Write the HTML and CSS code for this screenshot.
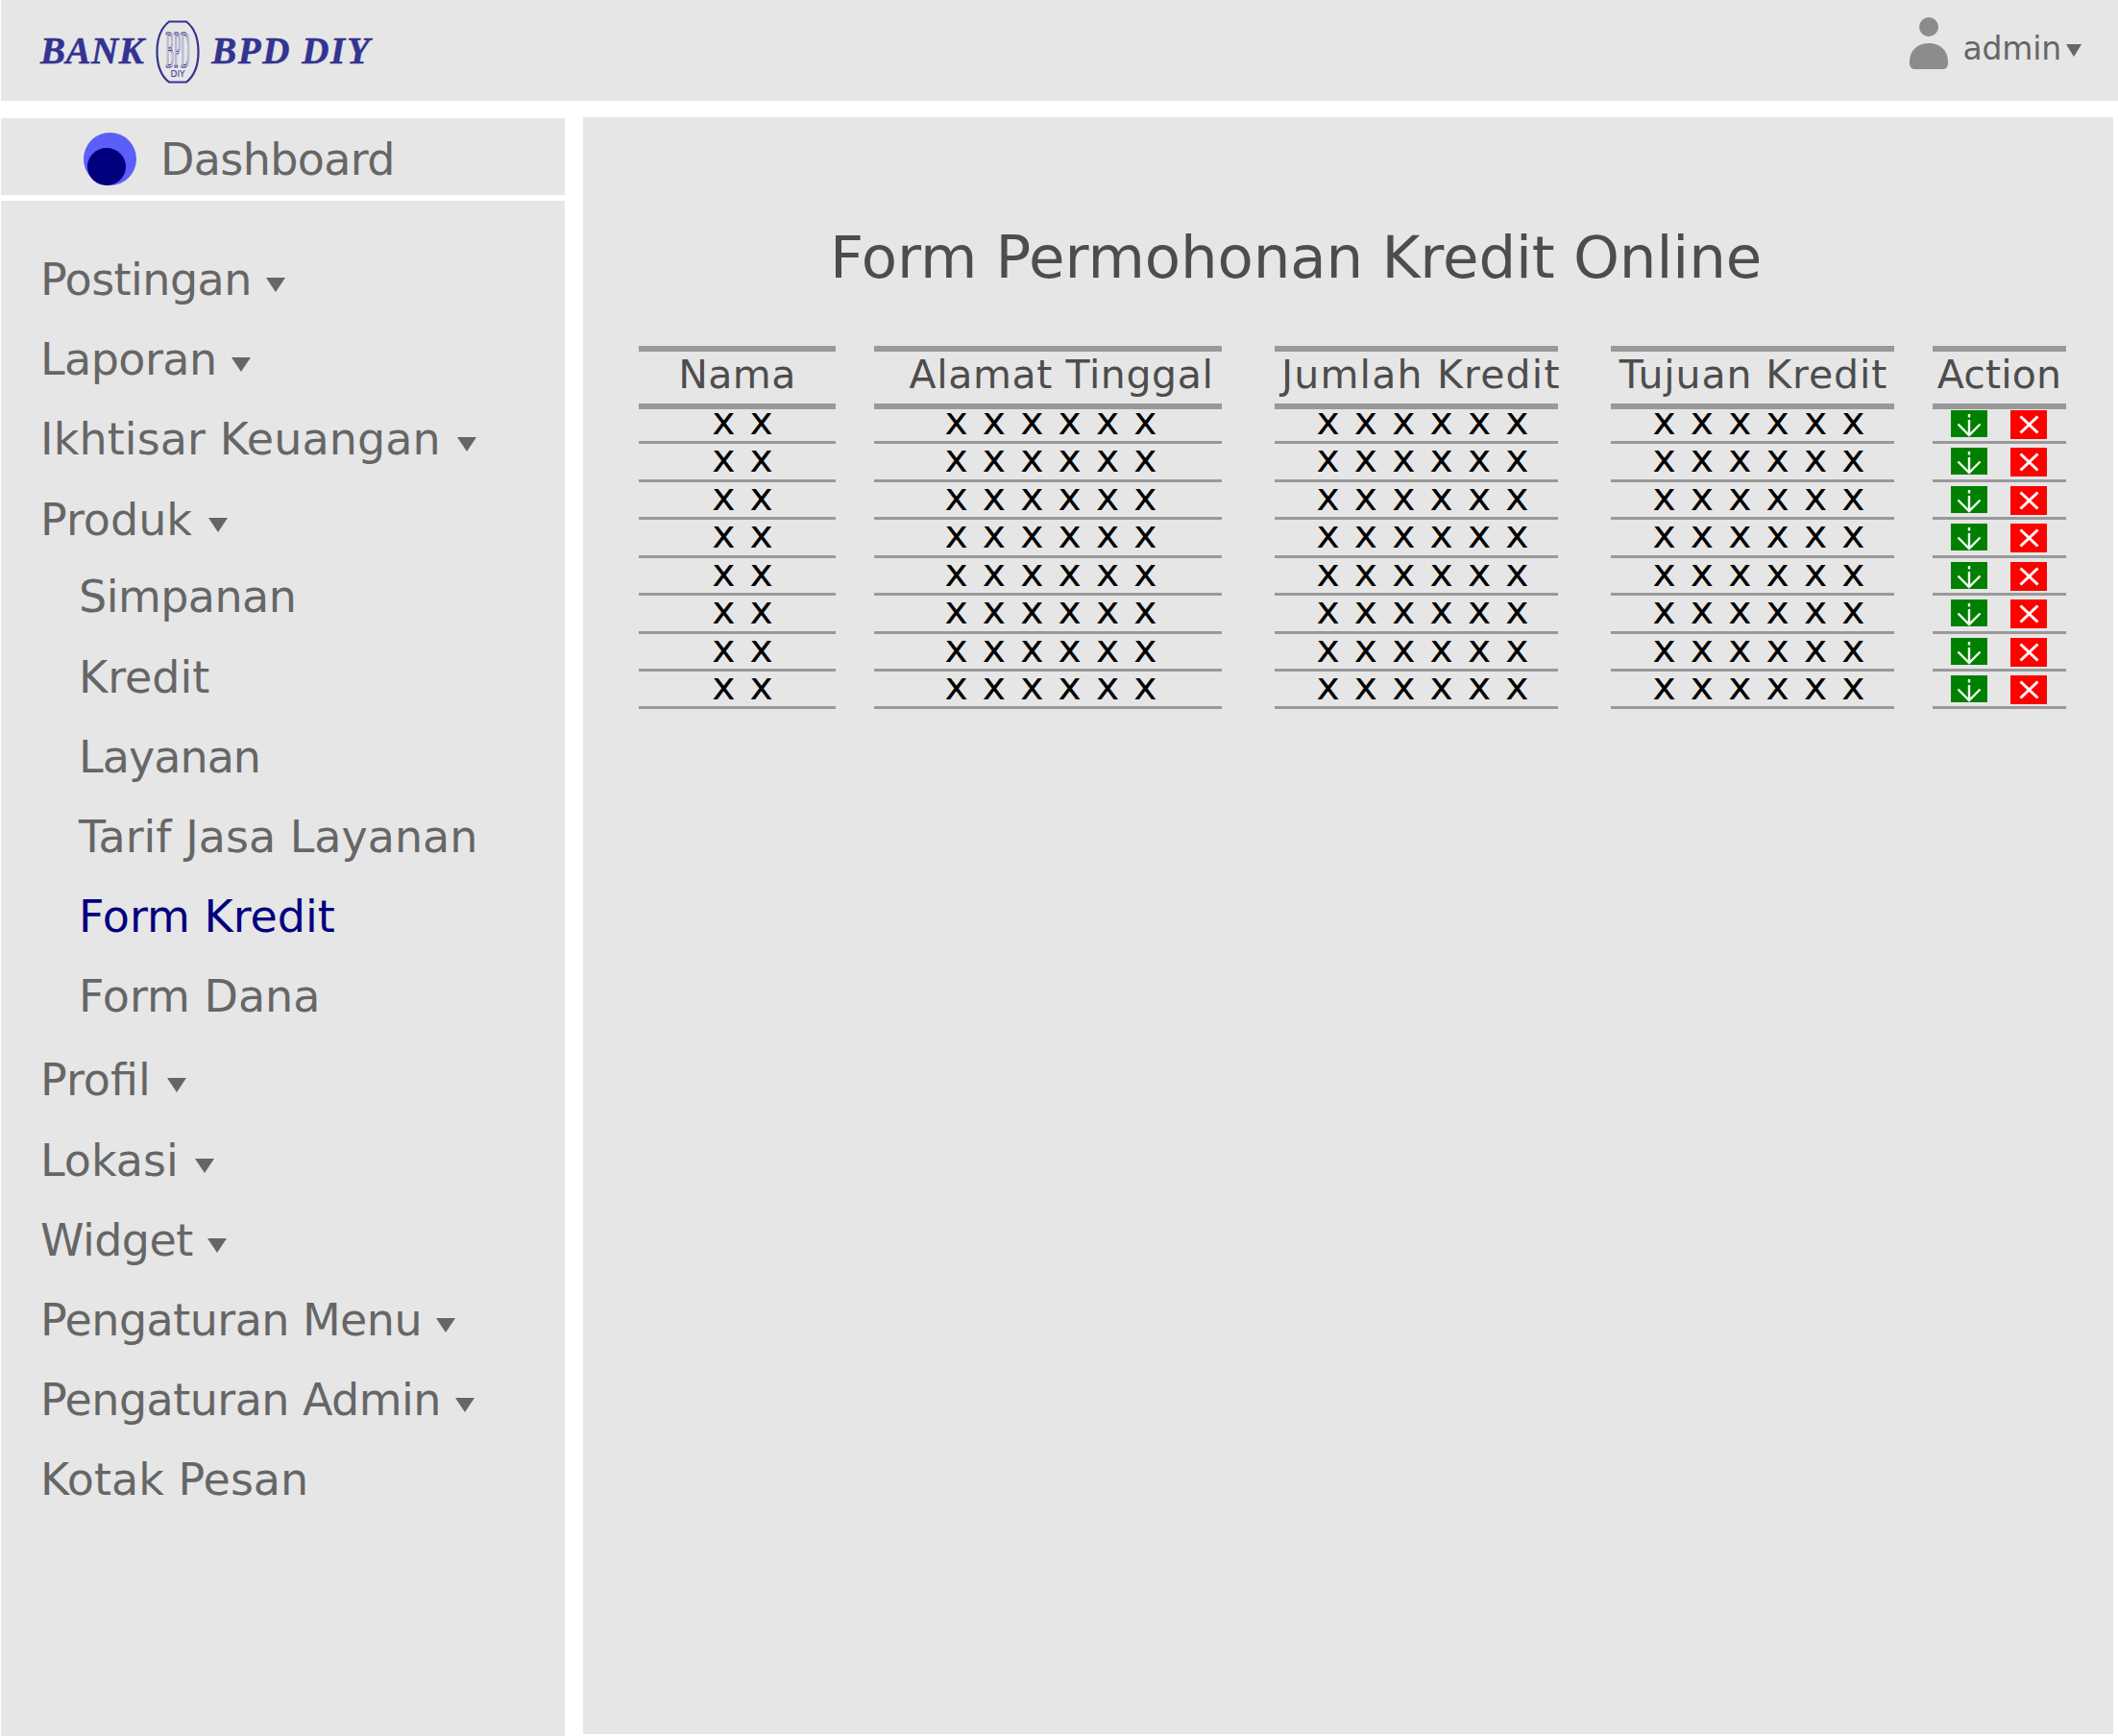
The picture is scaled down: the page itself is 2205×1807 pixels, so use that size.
FILE: index.html
```html
<!DOCTYPE html>
<html lang="id">
<head>
<meta charset="utf-8">
<title>Form Permohonan Kredit Online</title>
<link rel="stylesheet" href="styles.css">
</head>
<body>
<svg class="defs" width="0" height="0">
  <symbol id="i-ok" viewBox="0 0 38 28"><path d="M19 4v3.500M19 10v15.500M7.500 14.500L19 26 30.500 14.500" fill="none" stroke="#f2f8f2" stroke-width="2.400"/></symbol>
  <symbol id="i-del" viewBox="0 0 38 30"><path d="M10.500 6.500l18 17M28.500 6.500l-18 17" fill="none" stroke="#fff" stroke-width="3"/></symbol>
</svg>
<div class="page">
  <header class="topbar">
    <div class="logo">
      <span>BANK</span>
      <svg class="emblem" width="46" height="66" viewBox="0 0 46 66">
        <path d="M14 1.500H32C39 7 44.500 18 44.500 33S39 59 32 64.500H14C7 59 1.500 48 1.500 33S7 7 14 1.500Z" fill="none" stroke="#333391" stroke-width="2.200"/>
        <text class="emblem-mono" x="23" y="49" textLength="25" lengthAdjust="spacingAndGlyphs" text-anchor="middle">BPD</text>
        <text class="emblem-sub" x="23" y="59" textLength="15" lengthAdjust="spacingAndGlyphs" text-anchor="middle">DIY</text>
      </svg>
      <span class="logo-name">BPD DIY</span>
    </div>
    <div class="user">
      <svg class="user-icon" width="40" height="54" viewBox="0 0 40 54">
        <circle cx="20" cy="10" r="10" fill="#8c8c8c"/>
        <path d="M0 46C0 34 9 27 20 27S40 34 40 46V48C40 51 38 54 35 54H5C2 54 0 51 0 48Z" fill="#8c8c8c"/>
      </svg>
      <span class="user-name">admin</span>
      <i class="caret caret-small"></i>
    </div>
  </header>
  <div class="body-row">
    <aside class="sidebar">
      <div class="dash">
        <span class="dash-icon"><span class="dash-icon-inner"></span></span>
        <span class="dash-label">Dashboard</span>
      </div>
      <nav class="menu">
        <ul class="menu-list">
          <li class="menu-item tight">Postingan<i class="caret"></i></li>
          <li class="menu-item tight">Laporan<i class="caret"></i></li>
          <li class="menu-item loose">Ikhtisar Keuangan<i class="caret"></i></li>
          <li class="menu-item">Produk<i class="caret"></i></li>
          <li>
            <ul class="sub-list">
              <li class="menu-item tight">Simpanan</li>
              <li class="menu-item">Kredit</li>
              <li class="menu-item tighter">Layanan</li>
              <li class="menu-item">Tarif Jasa Layanan</li>
              <li class="menu-item active">Form Kredit</li>
              <li class="menu-item">Form Dana</li>
            </ul>
          </li>
          <li class="menu-item">Profil<i class="caret"></i></li>
          <li class="menu-item">Lokasi<i class="caret"></i></li>
          <li class="menu-item tight">Widget<i class="caret"></i></li>
          <li class="menu-item tight">Pengaturan Menu<i class="caret"></i></li>
          <li class="menu-item tight">Pengaturan Admin<i class="caret"></i></li>
          <li class="menu-item">Kotak Pesan</li>
        </ul>
      </nav>
    </aside>
    <main class="content">
      <h1 class="title">Form Permohonan Kredit Online</h1>
      <div class="table">
        <div class="col col-nama"><div class="head">Nama</div><div class="cell">x x</div><div class="cell">x x</div><div class="cell">x x</div><div class="cell">x x</div><div class="cell">x x</div><div class="cell">x x</div><div class="cell">x x</div><div class="cell">x x</div></div>
        <div class="col col-alamat"><div class="head">Alamat Tinggal</div><div class="cell">x x x x x x</div><div class="cell">x x x x x x</div><div class="cell">x x x x x x</div><div class="cell">x x x x x x</div><div class="cell">x x x x x x</div><div class="cell">x x x x x x</div><div class="cell">x x x x x x</div><div class="cell">x x x x x x</div></div>
        <div class="col col-jumlah"><div class="head">Jumlah Kredit</div><div class="cell">x x x x x x</div><div class="cell">x x x x x x</div><div class="cell">x x x x x x</div><div class="cell">x x x x x x</div><div class="cell">x x x x x x</div><div class="cell">x x x x x x</div><div class="cell">x x x x x x</div><div class="cell">x x x x x x</div></div>
        <div class="col col-tujuan"><div class="head">Tujuan Kredit</div><div class="cell">x x x x x x</div><div class="cell">x x x x x x</div><div class="cell">x x x x x x</div><div class="cell">x x x x x x</div><div class="cell">x x x x x x</div><div class="cell">x x x x x x</div><div class="cell">x x x x x x</div><div class="cell">x x x x x x</div></div>
        <div class="col col-action">
          <div class="head">Action</div>
          <div class="cell actions"><svg class="btn-ok"><use href="#i-ok"/></svg><svg class="btn-del"><use href="#i-del"/></svg></div>
          <div class="cell actions"><svg class="btn-ok"><use href="#i-ok"/></svg><svg class="btn-del"><use href="#i-del"/></svg></div>
          <div class="cell actions"><svg class="btn-ok"><use href="#i-ok"/></svg><svg class="btn-del"><use href="#i-del"/></svg></div>
          <div class="cell actions"><svg class="btn-ok"><use href="#i-ok"/></svg><svg class="btn-del"><use href="#i-del"/></svg></div>
          <div class="cell actions"><svg class="btn-ok"><use href="#i-ok"/></svg><svg class="btn-del"><use href="#i-del"/></svg></div>
          <div class="cell actions"><svg class="btn-ok"><use href="#i-ok"/></svg><svg class="btn-del"><use href="#i-del"/></svg></div>
          <div class="cell actions"><svg class="btn-ok"><use href="#i-ok"/></svg><svg class="btn-del"><use href="#i-del"/></svg></div>
          <div class="cell actions"><svg class="btn-ok"><use href="#i-ok"/></svg><svg class="btn-del"><use href="#i-del"/></svg></div>
        </div>
      </div>
    </main>
  </div>
</div>
</body>
</html>
```
FILE: styles.css
```css
* { box-sizing: border-box; }
html, body { margin: 0; padding: 0; background: #fff; }
body { font-family: "DejaVu Sans", sans-serif; color: #666; overflow: hidden; }
.defs { display: block; height: 0; }
.page { width: 2205px; height: 1807px; display: flex; flex-direction: column; overflow: hidden; }

.topbar { margin-left: 1px; height: 105px; flex: none; background: #e6e6e6; display: flex; justify-content: space-between; padding: 0 38px 0 41px; }
.logo { display: flex; align-items: center; gap: 12px; font: italic bold 39px "Liberation Serif", serif; color: #333391; letter-spacing: .5px; -webkit-text-stroke: .5px #333391; }
.logo-name { letter-spacing: 1.6px; }
.emblem { flex: none; margin-top: 3px; -webkit-text-stroke: 0; }
.emblem-mono { font: 54px "Liberation Serif", serif; fill: none; stroke: #333391; stroke-width: 1.200; }
.emblem-sub { font: 9px "DejaVu Sans", sans-serif; letter-spacing: 0; fill: #333391; }
.user { display: flex; align-items: flex-start; padding-top: 18px; }
.user-icon { flex: none; margin-right: 16px; }
.user-name { font-size: 33px; line-height: 1; margin-top: 16px; letter-spacing: -.2px; }

.caret { display: inline-block; width: 0; height: 0; margin-left: 17px; border-left: 10px solid transparent; border-right: 10px solid transparent; border-top: 15px solid #666; vertical-align: 3px; }
.caret-small { margin: 28px 0 0 5px; border-left-width: 8px; border-right-width: 8px; border-top-width: 13px; }

.body-row { flex: 1; min-height: 0; display: flex; margin-top: 17px; }
.sidebar { margin-left: 1px; width: 587px; flex: none; display: flex; flex-direction: column; padding-top: 1px; }
.dash { height: 80px; background: #e6e6e6; display: flex; align-items: center; padding: 5px 0 0 86px; gap: 25px; font-size: 46px; flex: none; margin-bottom: 6px; }
.dash-label { letter-spacing: -.65px; }
.dash-icon { width: 55px; height: 55px; border-radius: 50%; background: #5b5ef8; position: relative; display: block; }
.dash-icon-inner { position: absolute; left: 4px; bottom: 0; width: 40px; height: 39px; border-radius: 50%; background: #00007f; }
.menu { flex: 1; background: #e6e6e6; padding-top: 41px; }
.menu-list, .sub-list { list-style: none; margin: 0; padding: 0; }
.menu-list { padding-left: 41px; }
.sub-list { padding-left: 40px; margin: -2.300px 0 3.800px; }
.menu-item { height: 83.200px; line-height: 83.200px; font-size: 46px; white-space: nowrap; }
.tight { letter-spacing: -.55px; }
.tight .caret { margin-left: 15px; }
.tighter { letter-spacing: -.95px; }
.loose { letter-spacing: .1px; }
.active { color: #00007f; }

.content { margin-left: 19px; width: 1593px; height: 1683px; background: #e6e6e6; padding: 111px 0 0 58px; }
.title { margin: 0 0 0 199px; font-size: 61px; letter-spacing: -.1px; font-weight: 400; line-height: 70px; color: #4d4d4d; white-space: nowrap; }
.table { display: flex; margin-top: 57px; color: #000; }
.col { flex: none; }
.col-nama { width: 205px; }
.col-alamat { width: 362px; margin-left: 40px; }
.col-jumlah { width: 295px; margin-left: 55px; }
.col-tujuan { width: 295px; margin-left: 55px; }
.col-action { width: 139px; margin-left: 40px; }
.head { height: 66px; border-top: 6px solid #999; border-bottom: 6px solid #999; font-size: 41px; line-height: 48px; text-align: center; color: #4d4d4d; white-space: nowrap; }
.col-nama .head { letter-spacing: .4px; }
.col-alamat .head { letter-spacing: .6px; padding-left: 28px; }
.col-jumlah .head { letter-spacing: 1.200px; padding-left: 7px; }
.col-tujuan .head { letter-spacing: .9px; padding-left: 2px; }
.col-action .head { letter-spacing: .2px; }
.cell { height: 39.430px; border-bottom: 3px solid #999; font-size: 41px; line-height: 31.600px; text-align: center; word-spacing: 2.100px; }
.head + .cell { height: 36.430px; line-height: 25.600px; }
.col-nama .cell { padding-left: 11px; }
.col-alamat .cell { padding-left: 6px; }
.col-jumlah .cell, .col-tujuan .cell { padding-left: 13px; }
.col-action .cell { padding: 4px 20px 0 19px; }
.col-action .head + .cell { padding-top: 1px; }
.actions { display: flex; align-items: flex-start; justify-content: space-between; }
.btn-ok { display: block; width: 38px; height: 28px; background: #008000; }
.btn-del { display: block; width: 38px; height: 30px; background: #f00; }
```
